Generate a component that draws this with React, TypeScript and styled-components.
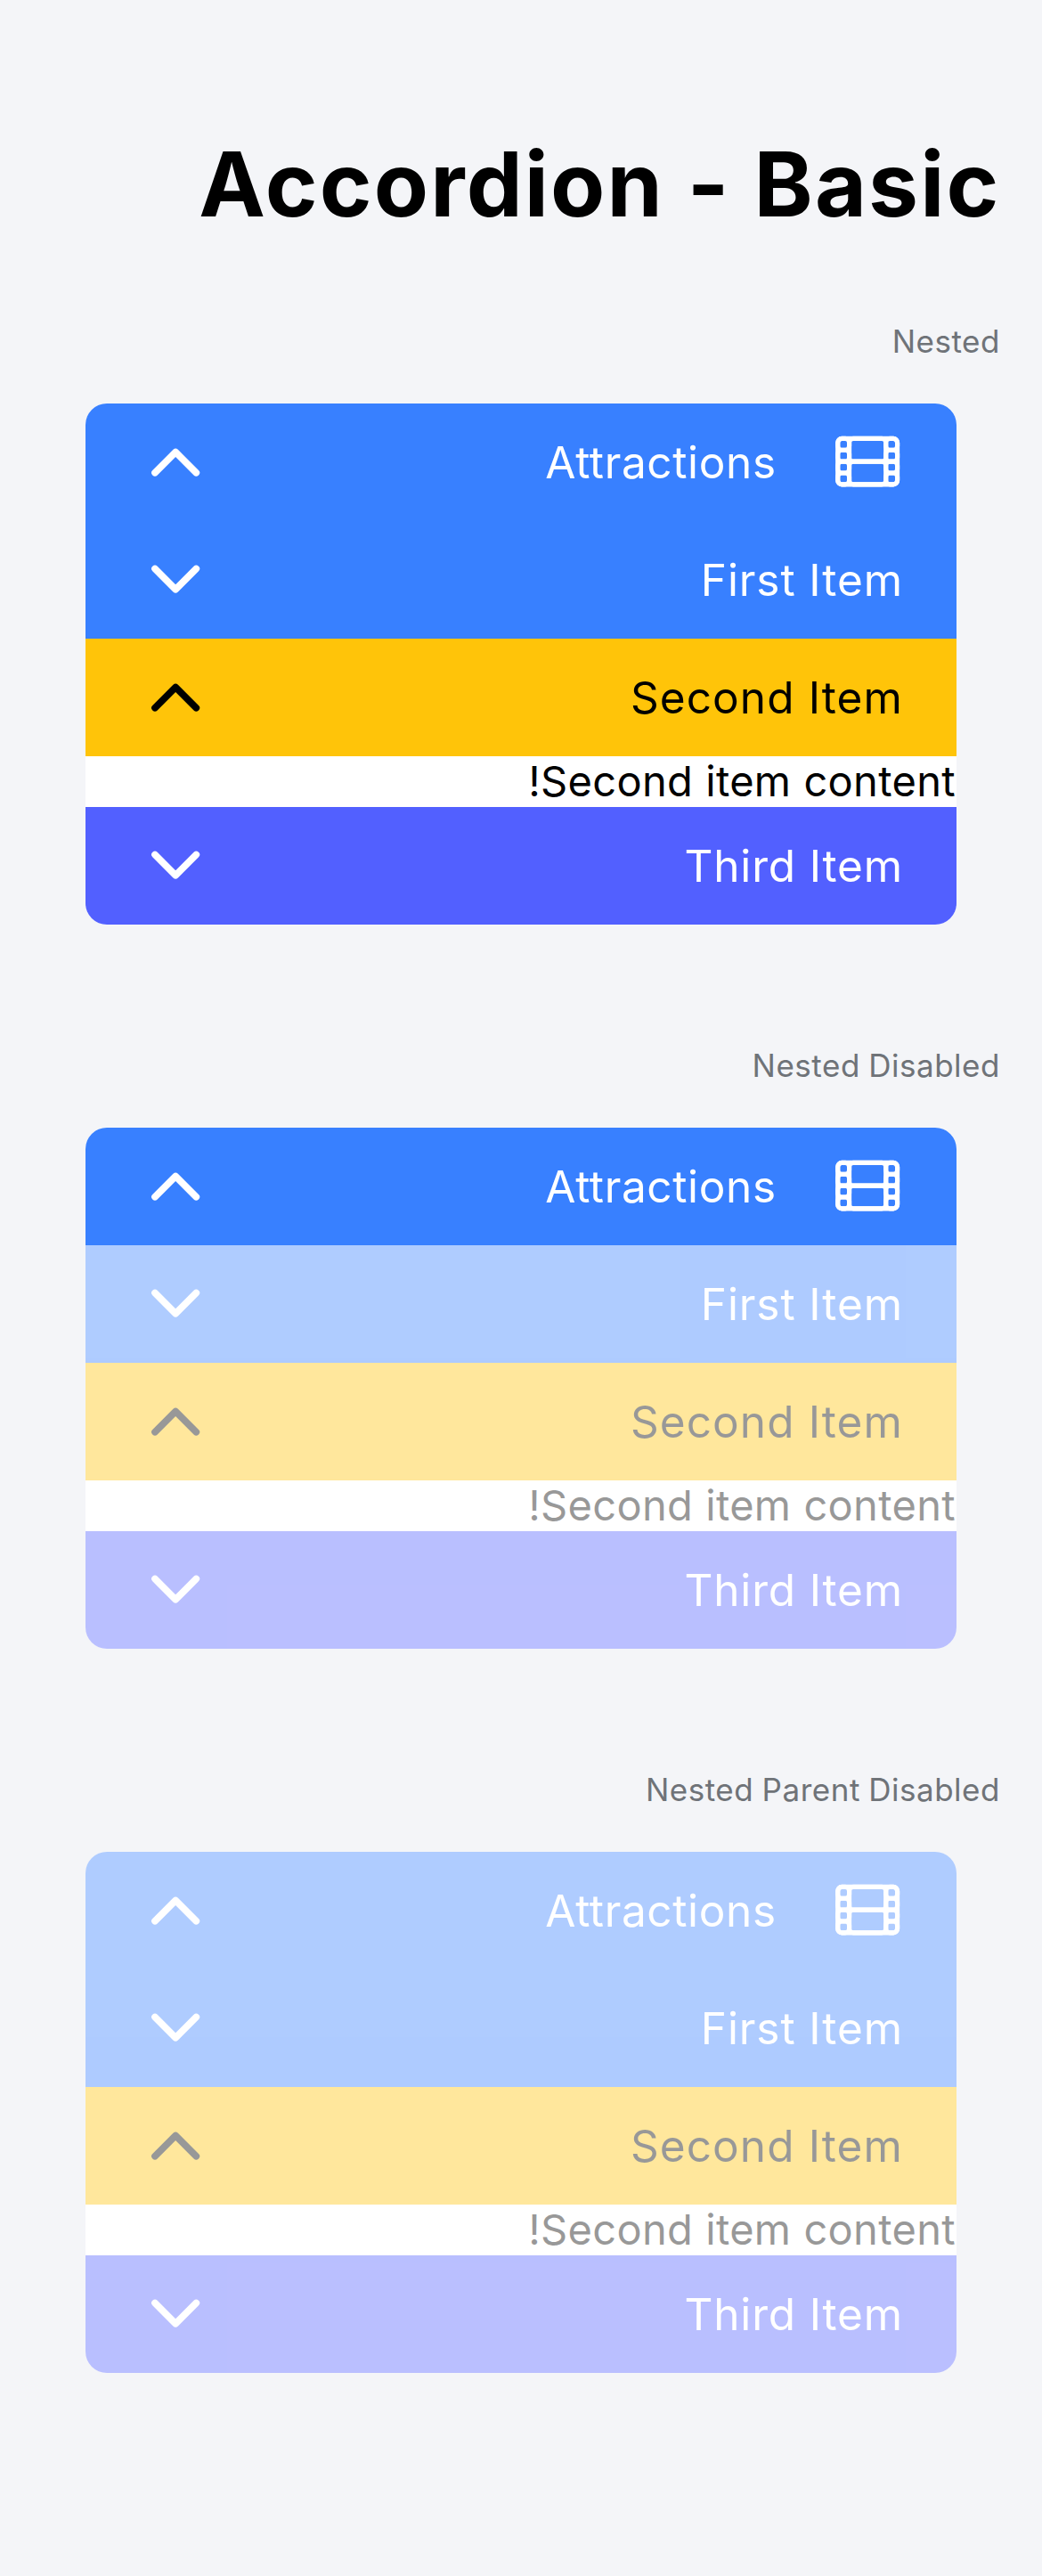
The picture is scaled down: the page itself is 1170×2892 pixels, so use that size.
import React from 'react';
import styled, { createGlobalStyle } from 'styled-components';

const GlobalStyle = createGlobalStyle`
  body {
    margin: 0;
    background: #f4f5f8;
    font-family: Inter, 'Liberation Sans', sans-serif;
    -webkit-font-smoothing: antialiased;
  }
`;

type Tone = 'primary' | 'warning' | 'tertiary';

const tones: Record<Tone, { background: string; color: string }> = {
  primary: { background: '#3880ff', color: '#fff' },
  warning: { background: '#ffc409', color: '#000' },
  tertiary: { background: '#5260ff', color: '#fff' },
};

const Page = styled.main`
  box-sizing: border-box;
  width: 1170px;
  min-height: 2892px;
  padding: 147px 0 0;
`;

const Title = styled.h1`
  margin: 0;
  padding-right: 46.5px;
  font-size: 100px;
  font-weight: 700;
  line-height: 119px;
  letter-spacing: 2.15px;
  text-align: right;
  white-space: nowrap;
`;

const Sections = styled.div`
  display: flex;
  flex-direction: column;
  gap: 131px;
  margin-top: 90px;
`;

const Section = styled.section`
  display: flex;
  flex-direction: column;
  gap: 43px;
`;

const SectionLabel = styled.h2`
  margin: 0;
  padding-right: 47px;
  color: #6f7378;
  font-size: 35px;
  font-weight: 400;
  line-height: 54px;
  letter-spacing: 0.52px;
  word-spacing: -1px;
  text-align: right;
`;

const Card = styled.div`
  display: flex;
  flex-direction: column;
  margin: 0 96px;
  overflow: hidden;
  border-radius: 24px;
  background: #fff;
`;

const Group = styled.div<{ $disabled?: boolean }>`
  opacity: ${(p) => (p.$disabled ? 0.4 : 1)};
`;

const Header = styled.div<{ $tone: Tone }>`
  box-sizing: border-box;
  display: flex;
  align-items: center;
  justify-content: space-between;
  height: 132px;
  padding: 0 60px;
  background: ${(p) => tones[p.$tone].background};
  color: ${(p) => tones[p.$tone].color};
`;

const HeaderLabel = styled.div`
  display: flex;
  align-items: center;
  gap: 61px;
`;

const HeaderText = styled.span<{ $tracking: number }>`
  font-size: 49.5px;
  line-height: 132px;
  letter-spacing: ${(p) => p.$tracking}px;
  white-space: nowrap;
`;

const Icon = styled.svg`
  display: block;
  flex: none;
  width: 82.3px;
  height: 82.3px;
  margin-bottom: 2.6px;
  fill: none;
  stroke: currentColor;
  stroke-linejoin: round;
`;

const Film = styled(Icon)`
  margin-right: -1px;
  stroke-width: 32;
`;

const Chevron = styled(Icon)<{ $open?: boolean }>`
  margin-bottom: ${(p) => (p.$open ? -0.6 : 2.6)}px;
  transform: ${(p) => (p.$open ? 'rotate(180deg)' : 'none')};
  stroke-width: 48;
  stroke-linecap: round;
`;

const Content = styled.div`
  height: 57px;
  padding-right: 1px;
  background: #fff;
  color: #000;
  font-size: 47px;
  line-height: 55px;
  letter-spacing: 0.33px;
  word-spacing: 0.5px;
  text-align: right;
`;

const holes = [96, 176, 256, 336];

function FilmIcon() {
  return (
    <Film viewBox="0 0 512 512">
      <rect x="48" y="96" width="416" height="320" rx="28" />
      {holes.map((y) => (
        <React.Fragment key={y}>
          <rect x="384" y={y} width="80" height="80" rx="28" />
          <rect x="48" y={y} width="80" height="80" rx="28" />
        </React.Fragment>
      ))}
      <rect x="128" y="96" width="256" height="160" rx="28" />
      <rect x="128" y="256" width="256" height="160" rx="28" />
    </Film>
  );
}

interface ItemProps {
  title: string;
  tone: Tone;
  tracking: number;
  open?: boolean;
  film?: boolean;
}

function ItemHeader({ title, tone, tracking, open, film }: ItemProps) {
  return (
    <Header $tone={tone}>
      <Chevron viewBox="0 0 512 512" $open={open}>
        <path d="M112 184l144 144 144-144" />
      </Chevron>
      <HeaderLabel>
        <HeaderText $tracking={tracking}>{title}</HeaderText>
        {film && <FilmIcon />}
      </HeaderLabel>
    </Header>
  );
}

interface AccordionProps {
  label: string;
  parentDisabled?: boolean;
  childrenDisabled?: boolean;
}

function NestedAccordion({ label, parentDisabled, childrenDisabled }: AccordionProps) {
  return (
    <Section>
      <SectionLabel>{label}</SectionLabel>
      <Card>
        <Group $disabled={parentDisabled}>
          <ItemHeader title="Attractions" tone="primary" tracking={0.64} open film />
          <Group $disabled={childrenDisabled}>
            <ItemHeader title="First Item" tone="primary" tracking={0.92} />
            <ItemHeader title="Second Item" tone="warning" tracking={1.1} open />
            <Content>!Second item content</Content>
            <ItemHeader title="Third Item" tone="tertiary" tracking={0.83} />
          </Group>
        </Group>
      </Card>
    </Section>
  );
}

export default function App() {
  return (
    <>
      <GlobalStyle />
      <Page>
        <Title>Accordion - Basic</Title>
        <Sections>
          <NestedAccordion label="Nested" />
          <NestedAccordion label="Nested Disabled" childrenDisabled />
          <NestedAccordion label="Nested Parent Disabled" parentDisabled />
        </Sections>
      </Page>
    </>
  );
}
